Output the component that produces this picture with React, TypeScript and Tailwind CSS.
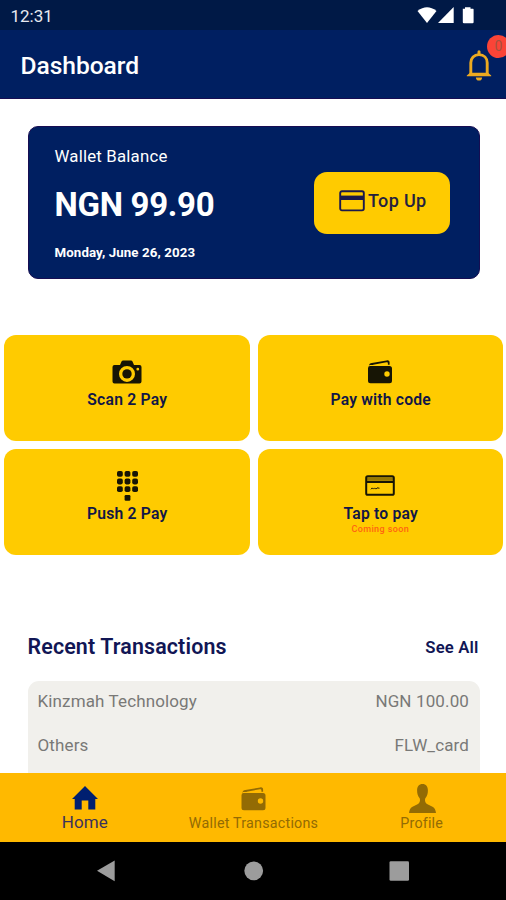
import React from "react";

function Wallet({ className }: { className?: string }) {
  return (
    <svg viewBox="0 0 24 24" className={className} fill="currentColor">
      <path d="M1 6.2C1 4 2.2 3.4 3.8 3.1L18.6.4C20.7 0 21.6 1 21.6 2.6V4.8H19.9V3.4C19.9 2.4 19.3 2.1 18.4 2.3L5.2 4.7V4.9H1.6z" />
      <path fillRule="evenodd" d="M3 6H21.5Q24 6 24 8.5V20.7Q24 23.2 21.5 23.2H2.5Q0 23.2 0 20.7V8.2Q0 6 2 6zM19 11.3A2.7 2.7 0 1 0 19 16.7A2.7 2.7 0 1 0 19 11.3z" />
    </svg>
  );
}

function Camera() {
  return (
    <svg viewBox="0 0 30 24" className="h-6 w-[30px] text-[#171505]" fill="currentColor">
      <path fillRule="evenodd" d="M2.5 5H8L9.5 1.5Q10 .5 11.2.5H19Q20 .5 20.5 1.5L22 5H27.5Q29.5 5 29.5 7V21.5Q29.5 23.5 27.5 23.5H2.5Q.5 23.5.5 21.5V7Q.5 5 2.5 5zM15 5.9A8 8 0 1 0 15 21.9A8 8 0 1 0 15 5.9zM25.8 7.8A1.4 1.4 0 1 0 25.8 10.6A1.4 1.4 0 1 0 25.8 7.8z" />
      <circle cx="15" cy="13.9" r="4.7" />
    </svg>
  );
}

function Keypad() {
  return (
    <svg viewBox="0 0 21 30" className="ml-[1px] h-[30px] w-[21px] text-[#171505]" fill="currentColor">
      {[0, 7.6, 15.2].map((y) => [0, 7.6, 15.2].map((x) => (
        <rect key={`${x}-${y}`} x={x} y={y} width="5.8" height="5.8" rx="1.8" />
      )))}
      <rect x="7.6" y="24" width="5.8" height="5.8" rx="1.2" />
    </svg>
  );
}

function BankCard() {
  return (
    <svg viewBox="0 0 30 21" className="h-[21px] w-[30px] text-[#171505]" fill="none" stroke="currentColor">
      <rect x="1.2" y="1.2" width="27.6" height="18.6" rx="1.6" strokeWidth="2" />
      <path d="M1 3.7H29" strokeWidth="2.6" opacity=".45" />
      <path d="M1 6.8H29" strokeWidth="2.4" />
      <path d="M6 14.3L7.2 12.9L8.4 14.1L9.6 12.9L10.8 14.1L12 12.9L14.5 13.2" strokeWidth="1" />
    </svg>
  );
}

function Tile({ icon, label, note }: { icon: React.ReactNode; label: string; note?: string }) {
  return (
    <button className="flex h-[106px] w-[245.5px] flex-col items-center rounded-[12px] bg-[#ffcb00] pt-[21px]">
      <span className="flex h-[31px] items-center justify-center">{icon}</span>
      <span className="ml-[1px] mt-[3px] whitespace-nowrap text-[15.7px] font-semibold leading-[20px] tracking-[0.2px] text-[#111647]">{label}</span>
      {note && <span className="-mt-[1px] text-[9px] font-medium leading-[12px] tracking-[0.4px] text-[#ff6412]">{note}</span>}
    </button>
  );
}

export default function App() {
  return (
    <div className="flex h-[900px] w-[506px] flex-col overflow-hidden bg-white font-['Roboto','Liberation_Sans',sans-serif]">
      <div className="flex h-[30px] shrink-0 items-start justify-between bg-[#001946] pl-[10.5px] pr-[32px] text-white">
        <span className="mt-[6px] text-[17px] leading-[20px] text-[#e8eaf0]">12:31</span>
        <svg viewBox="0 0 58 18" className="mt-[7px] h-[18px] w-[58px]" fill="white">
          <path d="M1.5 4Q11 -3.5 20.5 4L11 16z" />
          <path d="M37.7 0V16H22z" />
          <path d="M46.8 1.8H49V.3H54.5V1.8H57Q57.6 1.8 57.6 2.5V15.2Q57.6 16.3 56.5 16.3H48Q46.8 16.3 46.8 15.2z" />
        </svg>
      </div>
      <header className="relative flex h-[68.5px] shrink-0 items-center justify-between border-b border-[#170d52] bg-[#001f61] pl-[20.5px] pr-[14.5px]">
        <h1 className="mt-[4px] text-[24.6px] font-medium leading-[30px] tracking-[-0.05px] text-white">Dashboard</h1>
        <svg viewBox="0 0 26 32" className="mt-[4px] h-8 w-[26px] text-[#edaa20]" fill="none" stroke="currentColor">
          <path d="M4.8 24V12.8C4.8 8 8.1 4.6 13 4.6S21.2 8 21.2 12.8V24" strokeWidth="2.9" />
          <path d="M.8 25.5L4 22.8H22L25.2 25.5V26.3H.8z" fill="currentColor" stroke="none" />
          <path d="M13 4.5V1.8" strokeWidth="3" strokeLinecap="round" />
          <path d="M9.9 27.5A3.1 3.1 0 0 0 16.1 27.5z" fill="currentColor" stroke="none" />
        </svg>
        <span className="absolute left-[487px] top-[4.5px] flex h-[23px] w-[23px] items-center justify-center rounded-full bg-[#fa4437] text-[14px] text-[#a4523f]">0</span>
      </header>

      <main className="flex h-[674px] shrink-0 flex-col overflow-hidden">
        <section className="ml-[27.5px] mt-[27.5px] flex h-[153px] w-[452px] shrink-0 items-start justify-between rounded-[10px] border border-[#170d52] bg-[#001f61] pl-[26px] pr-[29px] text-white">
          <div className="flex flex-col items-start whitespace-nowrap">
            <p className="mt-[19px] text-[16.8px] leading-[20px] tracking-[0.2px]">Wallet Balance</p>
            <p className="mt-[19px] text-[33px] font-bold leading-[40px] tracking-[-0.3px]">NGN 99.90</p>
            <p className="mt-[17.5px] text-[13.3px] font-bold leading-[20px] tracking-[0.1px]">Monday, June 26, 2023</p>
          </div>
          <button className="mt-[45px] flex h-[62px] w-[136px] items-center rounded-[13px] bg-[#ffcb00] pl-[25.5px] text-[#24213f]">
            <svg viewBox="0 0 26 22" className="mt-[-4px] h-[22px] w-[26px]" fill="none" stroke="#1b194c">
              <rect x="1.2" y="1.2" width="23.6" height="19.2" rx="1.8" strokeWidth="1.9" />
              <path d="M1 7.8H25" strokeWidth="4.4" />
            </svg>
            <span className="-mt-[5px] ml-[3px] whitespace-nowrap text-[18px] font-medium leading-[24px] tracking-[0.35px]">Top Up</span>
          </button>
        </section>

        <section className="ml-[4px] mt-[56px] grid w-[499px] shrink-0 grid-cols-2 gap-x-[8px] gap-y-[8px]">
          <Tile icon={<Camera />} label="Scan 2 Pay" />
          <Tile icon={<Wallet className="h-[24px] w-[24px] text-[#171505]" />} label="Pay with code" />
          <Tile icon={<Keypad />} label="Push 2 Pay" />
          <Tile icon={<BankCard />} label="Tap to pay" note="Coming soon" />
        </section>

        <div className="ml-[27.5px] mt-[77px] flex w-[451px] shrink-0 items-center justify-between whitespace-nowrap text-[#111655]">
          <h2 className="-mt-[1px] text-[21.4px] font-semibold leading-[30px] tracking-[0.15px]">Recent Transactions</h2>
          <a className="mt-[1px] text-[16.7px] font-semibold leading-[30px] tracking-[0.15px]">See All</a>
        </div>
        <section className="ml-[28px] mt-[18px] flex h-[120px] w-[452px] shrink-0 flex-col gap-[20px] rounded-t-[11px] bg-[#f1f0ec] pl-[9.5px] pr-[11px] pt-[7.5px] text-[17px] leading-[24px] tracking-[0.13px] text-[#797977]">
          <div className="flex justify-between"><span>Kinzmah Technology</span><span>NGN 100.00</span></div>
          <div className="flex justify-between"><span>Others</span><span>FLW_card</span></div>
        </section>
      </main>

      <nav className="grid h-[69.5px] shrink-0 grid-cols-3 bg-[#ffb900] text-[#936b04]">
        <a className="flex flex-col items-center text-[#3b325c]">
          <svg viewBox="0 0 26 24" className="ml-[2px] mt-[13px] h-6 w-[26px]" fill="#001f70">
            <path d="M13 0L26 13H23.3V23.5H16.3V14.5H9.7V23.5H2.7V13H0z" />
          </svg>
          <span className="ml-[1px] mt-[2px] text-[17px] leading-[20px] tracking-[0.1px]">Home</span>
        </a>
        <a className="flex flex-col items-center">
          <Wallet className="ml-[2px] mt-[14px] h-[24px] w-[25px]" />
          <span className="ml-[1px] mt-[2.5px] whitespace-nowrap text-[14.3px] leading-[20px] tracking-[0.22px]">Wallet Transactions</span>
        </a>
        <a className="flex flex-col items-center">
          <svg viewBox="0 0 27 29" className="ml-[2px] mt-[11px] h-[29px] w-[27px]" fill="currentColor">
            <path d="M13.5 0C17 0 18.9 2.5 18.9 6.3C18.9 9.5 18.4 12 16.2 14.5C15.6 16.5 16.2 18.8 18 20L23.5 22.7C25.8 24 26.6 25.8 27 29H0C.4 25.8 1.2 24 3.5 22.7L9 20C10.8 18.8 11.4 16.5 10.8 14.5C8.6 12 8.1 9.5 8.1 6.3C8.1 2.5 10 0 13.5 0z" />
          </svg>
          <span className="mt-[0.5px] text-[14.3px] leading-[20px] tracking-[0.2px]">Profile</span>
        </a>
      </nav>
      <div className="flex h-[58px] shrink-0 items-center bg-black pl-[96px]">
        <svg viewBox="0 0 320 22" className="h-[22px] w-[320px]" fill="#9c9c9c">
          <path d="M1 10.8L18.7.5V21.3z" />
          <circle cx="157.7" cy="10.8" r="9.4" />
          <rect x="293.5" y="1.3" width="19.5" height="19.5" rx="1.3" />
        </svg>
      </div>
    </div>
  );
}
